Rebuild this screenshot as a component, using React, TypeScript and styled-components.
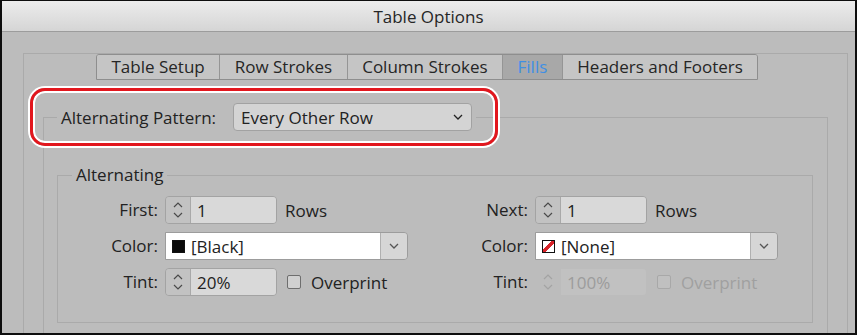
import React from 'react';
import styled, { createGlobalStyle } from 'styled-components';

const GlobalStyle = createGlobalStyle`
  html, body {
    margin: 0;
    padding: 0;
    background: #000;
  }
  body {
    font-family: "Open Sans", "DejaVu Sans", sans-serif;
    color: #222;
  }
`;

const Window = styled.div`
  width: 857px;
  height: 335px;
  box-sizing: border-box;
  border: 2px solid #0d0d0d;
  border-top-width: 1px;
  background: #bcbcbc;
  overflow: hidden;
  display: flex;
  flex-direction: column;
`;

const TitleBar = styled.div`
  height: 30px;
  flex-shrink: 0;
  background: linear-gradient(#ececec, #d5d5d5);
  border-bottom: 1px solid #9c9c9c;
  display: flex;
  align-items: center;
  justify-content: center;
  font-size: 17px;
  color: #262626;
`;

const Body = styled.div`
  flex: 1;
  min-height: 0;
  display: flex;
  padding: 21px 21px 0 21px;
`;

const TabPanel = styled.div`
  flex: 1;
  display: flex;
  flex-direction: column;
  border: 1px solid #aaaaaa;
  border-bottom: none;
  padding: 0 19px;
`;

const TabStrip = styled.div`
  align-self: flex-start;
  margin-left: 53px;
  display: flex;
  height: 26px;
  box-sizing: border-box;
  border: 1px solid #8e8e8e;
  border-radius: 3px 3px 0 0;
  overflow: hidden;
`;

const Tab = styled.div<{ $active?: boolean }>`
  padding: 0 14.5px;
  font-size: 17px;
  line-height: 24px;
  background: ${(p) => (p.$active ? '#a8a8a8' : '#c5c5c5')};
  color: ${(p) => (p.$active ? '#3f8fe4' : '#262626')};
  & + & {
    border-left: 1px solid #959595;
  }
`;

const PatternBox = styled.fieldset`
  flex: 1;
  margin: 23px 0 0;
  padding: 0 14px 0 13px;
  border: 1px solid #aaaaaa;
  border-bottom: none;
  min-width: 0;
`;

const PatternLegend = styled.legend`
  position: relative;
  display: flex;
  align-items: center;
  gap: 17px;
  padding: 0 4px;
  font-size: 17px;
`;

const Highlight = styled.div`
  position: absolute;
  top: -15px;
  bottom: -15px;
  left: -27px;
  right: -22px;
  border: 3px solid #e2161d;
  border-radius: 15px;
  box-shadow: 0 0 0 2px #fff, inset 0 0 0 2px #fff;
  pointer-events: none;
`;

const PatternSelect = styled.div`
  width: 239px;
  height: 28px;
  box-sizing: border-box;
  display: flex;
  align-items: center;
  justify-content: space-between;
  padding: 0 8px 0 7px;
  border: 1px solid #a2a2a2;
  border-radius: 4px;
  background: #d4d4d4;
  font-size: 17px;
`;

const Group = styled.fieldset`
  margin: 34px 0 0;
  padding: 11px 0 26px 14px;
  border: 1px solid #aaaaaa;
  min-width: 0;
`;

const GroupLegend = styled.legend`
  padding: 0 4px;
  font-size: 17px;
  line-height: 20px;
`;

const Columns = styled.div`
  display: flex;
`;

const Column = styled.div`
  width: 370px;
  display: grid;
  grid-template-columns: 86px auto;
  column-gap: 7px;
  row-gap: 8px;
  align-items: center;
  justify-items: start;
`;

const Label = styled.div`
  justify-self: end;
  font-size: 17px;
  line-height: 28px;
`;

const Inline = styled.div<{ $gap: number }>`
  display: flex;
  align-items: center;
  gap: ${(p) => p.$gap}px;
  font-size: 17px;
`;

const Stepper = styled.div<{ $disabled?: boolean }>`
  width: 112px;
  height: 28px;
  box-sizing: border-box;
  display: flex;
  border: 1px solid ${(p) => (p.$disabled ? 'transparent' : '#a3a3a3')};
  border-radius: 4px;
  overflow: hidden;
`;

const Arrows = styled.div<{ $disabled?: boolean }>`
  width: 24px;
  display: flex;
  align-items: center;
  justify-content: center;
  background: ${(p) => (p.$disabled ? 'transparent' : '#c2c2c2')};
  border-right: 1px solid ${(p) => (p.$disabled ? 'transparent' : '#a9a9a9')};
  color: ${(p) => (p.$disabled ? '#a3a3a3' : '#4a4a4a')};
`;

const StepValue = styled.div<{ $disabled?: boolean }>`
  flex: 1;
  display: flex;
  align-items: center;
  padding-left: 6px;
  background: ${(p) => (p.$disabled ? '#c1c1c1' : '#d9d9d9')};
  color: ${(p) => (p.$disabled ? '#9c9c9c' : '#222')};
  font-size: 17px;
`;

const ColorSelect = styled.div`
  width: 243px;
  height: 28px;
  box-sizing: border-box;
  display: flex;
  border: 1px solid #9c9c9c;
  border-radius: 0 4px 4px 0;
  overflow: hidden;
`;

const ColorField = styled.div`
  flex: 1;
  display: flex;
  align-items: center;
  gap: 6px;
  padding-left: 6px;
  background: #fff;
  font-size: 17px;
`;

const DropButton = styled.div`
  width: 26px;
  display: flex;
  align-items: center;
  justify-content: center;
  background: #d6d6d6;
  border-left: 1px solid #b0b0b0;
  color: #555;
`;

const Swatch = styled.div<{ $none?: boolean }>`
  width: 13px;
  height: 13px;
  box-sizing: border-box;
  border: 1px solid #111;
  background: ${(p) =>
    p.$none
      ? 'linear-gradient(to bottom right, #fff calc(50% - 1.5px), #d8232a calc(50% - 1.5px), #d8232a calc(50% + 1.5px), #fff calc(50% + 1.5px))'
      : '#0a0a0a'};
`;

const Checkbox = styled.div<{ $disabled?: boolean }>`
  width: 14px;
  height: 14px;
  box-sizing: border-box;
  border: 1px solid ${(p) => (p.$disabled ? '#a8a8a8' : '#6e6e6e')};
  border-radius: 2px;
  background: ${(p) => (p.$disabled ? '#c0c0c0' : '#d0d0d0')};
`;

const CheckText = styled.span<{ $disabled?: boolean }>`
  color: ${(p) => (p.$disabled ? '#a0a0a0' : '#222')};
`;

const Chevron = () => (
  <svg width="10" height="6" viewBox="0 0 10 6">
    <path d="M1 1 L5 5 L9 1" fill="none" stroke="currentColor" strokeWidth="1.3" />
  </svg>
);

const UpDown = () => (
  <svg width="10" height="20" viewBox="0 0 10 20">
    <path d="M1 7 L5 3 L9 7" fill="none" stroke="currentColor" strokeWidth="1.2" />
    <path d="M1 13 L5 17 L9 13" fill="none" stroke="currentColor" strokeWidth="1.2" />
  </svg>
);

const NumberStepper: React.FC<{ value: string; disabled?: boolean }> = ({ value, disabled }) => (
  <Stepper $disabled={disabled}>
    <Arrows $disabled={disabled}>
      <UpDown />
    </Arrows>
    <StepValue $disabled={disabled}>{value}</StepValue>
  </Stepper>
);

const SwatchSelect: React.FC<{ name: string; none?: boolean }> = ({ name, none }) => (
  <ColorSelect>
    <ColorField>
      <Swatch $none={none} />
      {name}
    </ColorField>
    <DropButton>
      <Chevron />
    </DropButton>
  </ColorSelect>
);

const AlternatingColumn: React.FC<{
  countLabel: string;
  color: string;
  none?: boolean;
  tint: string;
  disabled?: boolean;
}> = ({ countLabel, color, none, tint, disabled }) => (
  <Column>
    <Label>{countLabel}</Label>
    <Inline $gap={8}>
      <NumberStepper value="1" />
      Rows
    </Inline>
    <Label>Color:</Label>
    <SwatchSelect name={color} none={none} />
    <Label>Tint:</Label>
    <Inline $gap={10}>
      <NumberStepper value={tint} disabled={disabled} />
      <Checkbox $disabled={disabled} />
      <CheckText $disabled={disabled}>Overprint</CheckText>
    </Inline>
  </Column>
);

const tabs = ['Table Setup', 'Row Strokes', 'Column Strokes', 'Fills', 'Headers and Footers'];

const App: React.FC = () => (
  <>
    <GlobalStyle />
    <Window>
      <TitleBar>Table Options</TitleBar>
      <Body>
        <TabPanel>
          <TabStrip>
            {tabs.map((t) => (
              <Tab key={t} $active={t === 'Fills'}>
                {t}
              </Tab>
            ))}
          </TabStrip>
          <PatternBox>
            <PatternLegend>
              <span>Alternating Pattern:</span>
              <PatternSelect>
                Every Other Row
                <Chevron />
              </PatternSelect>
              <Highlight />
            </PatternLegend>
            <Group>
              <GroupLegend>Alternating</GroupLegend>
              <Columns>
                <AlternatingColumn countLabel="First:" color="[Black]" tint="20%" />
                <AlternatingColumn countLabel="Next:" color="[None]" none tint="100%" disabled />
              </Columns>
            </Group>
          </PatternBox>
        </TabPanel>
      </Body>
    </Window>
  </>
);

export default App;
